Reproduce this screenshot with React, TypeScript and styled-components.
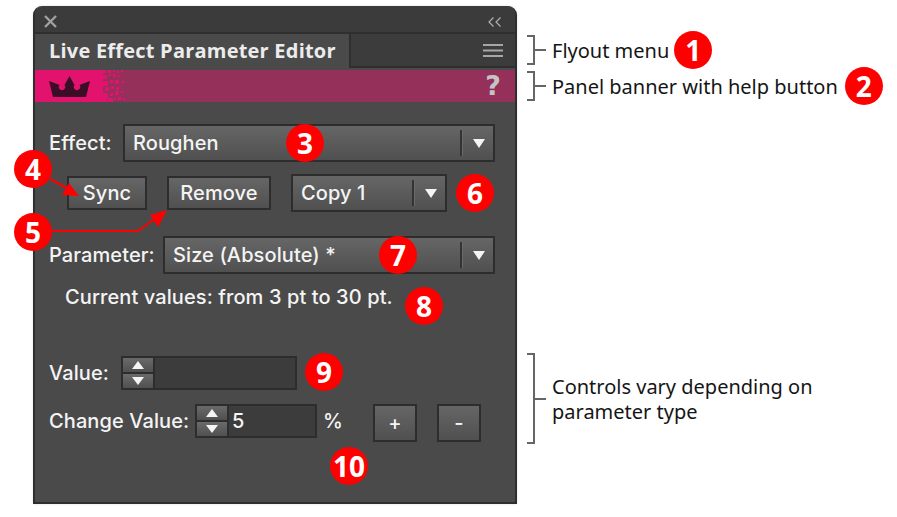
import styled, { createGlobalStyle } from "styled-components";

const GlobalStyle = createGlobalStyle`
  html, body {
    margin: 0;
    padding: 0;
    background: #fff;
  }
`;

const Page = styled.div`
  display: flex;
  align-items: flex-start;
  width: 897px;
  height: 517px;
  padding: 6px 0 0 33px;
  box-sizing: border-box;
  overflow: hidden;
`;

const Panel = styled.div`
  position: relative;
  width: 484px;
  height: 498px;
  box-sizing: border-box;
  flex: none;
  display: flex;
  flex-direction: column;
  background: #4a4a4a;
  border: 2px solid #2e2e2e;
  border-top: 0;
  border-radius: 9px 9px 0 0;
  box-shadow: 0 0 3px rgba(0, 0, 0, 0.12);
  color: #f4f4f4;
  font-family: "Inter", "Liberation Sans", sans-serif;
  font-size: 20px;
  font-weight: 500;
  letter-spacing: 0.1px;
`;

const TitleBar = styled.div`
  height: 26px;
  flex: none;
  box-sizing: border-box;
  display: flex;
  align-items: center;
  justify-content: space-between;
  padding: 5px 14px 0 9px;
  background: #3b3b3b;
  border-radius: 9px 9px 0 0;
`;

const TabRow = styled.div`
  height: 36px;
  flex: none;
  display: flex;
  background: #3c3c3c;
  border-top: 2px solid #2f2f2f;
  box-sizing: border-box;
`;

const Tab = styled.div`
  width: 314px;
  height: 36px;
  padding: 0 0 4px 14px;
  box-sizing: border-box;
  display: flex;
  align-items: center;
  background: #4a4a4a;
  color: #ececec;
  font-family: "Open Sans", sans-serif;
  font-weight: 700;
  font-size: 20px;
  letter-spacing: 0.22px;
`;

const TabRest = styled.div`
  flex: 1;
  display: flex;
  align-items: center;
  justify-content: flex-end;
  padding-right: 12px;
  border-left: 2px solid #2f2f2f;
  border-bottom: 2px solid #2f2f2f;
`;

const Banner = styled.div`
  height: 32px;
  margin-top: 2px;
  flex: none;
  display: flex;
  align-items: center;
  background: #943059;
`;

const BannerLead = styled.div`
  width: 68px;
  height: 100%;
  flex: none;
  display: flex;
  align-items: center;
  justify-content: center;
  background: #e3126e;
`;

const Help = styled.div`
  margin-left: auto;
  margin-right: 14px;
  color: #c4c4c4;
  font-family: "DejaVu Sans", sans-serif;
  font-weight: 700;
  font-size: 27px;
  line-height: 32px;
`;

const Body = styled.div`
  display: flex;
  flex-direction: column;
  padding: 22px 20px 0 14px;
`;

const Row = styled.div<{ $top?: number; $left?: number }>`
  display: flex;
  align-items: center;
  margin-top: ${(p) => p.$top ?? 0}px;
  margin-left: ${(p) => p.$left ?? 0}px;
`;

const Label = styled.span<{ $width: number }>`
  flex: none;
  width: ${(p) => p.$width}px;
`;

const Select = styled.div<{ $width: number; $left?: number }>`
  width: ${(p) => p.$width}px;
  height: 38px;
  margin-left: ${(p) => p.$left ?? 0}px;
  flex: none;
  box-sizing: border-box;
  display: flex;
  align-items: center;
  padding-left: 8px;
  background: linear-gradient(#666666, #505050);
  border: 2px solid #2d2d2d;
`;

const SelectText = styled.span`
  flex: 1;
`;

const SelectDivider = styled.i`
  display: block;
  width: 2px;
  height: 26px;
  background: #333;
  box-shadow: 1px 0 0 #6a6a6a;
`;

const Caret = styled.i`
  display: block;
  width: 0;
  height: 0;
  margin: 0 8px 0 11px;
  border-left: 6px solid transparent;
  border-right: 6px solid transparent;
  border-top: 9px solid #f5f5f5;
`;

const Button = styled.div<{ $width: number; $left?: number }>`
  width: ${(p) => p.$width}px;
  height: 34px;
  margin-left: ${(p) => p.$left ?? 0}px;
  flex: none;
  box-sizing: border-box;
  display: flex;
  align-items: center;
  justify-content: center;
  background: linear-gradient(#666666, #505050);
  border: 2px solid #2d2d2d;
`;

// taller than the row it sits in, hangs 4px below the spinner
const TallButton = styled(Button)`
  height: 38px;
  align-self: flex-start;
  margin-bottom: -4px;
`;

const Spinner = styled.div<{ $width: number }>`
  width: ${(p) => p.$width}px;
  height: 34px;
  flex: none;
  box-sizing: border-box;
  display: flex;
  align-items: center;
  background: #3c3c3c;
  border: 2px solid #2d2d2d;
`;

const Steppers = styled.div`
  width: 30px;
  height: 100%;
  flex: none;
  display: flex;
  flex-direction: column;
  border-right: 2px solid #2d2d2d;
`;

const Step = styled.div<{ $down?: boolean }>`
  flex: 1;
  display: flex;
  align-items: center;
  justify-content: center;
  background: linear-gradient(#6a6a6a, #505050);
  border-top: ${(p) => (p.$down ? "2px solid #2d2d2d" : "0")};

  &::before {
    content: "";
    border-left: 6px solid transparent;
    border-right: 6px solid transparent;
    ${(p) =>
      p.$down
        ? "border-top: 8px solid #f5f5f5;"
        : "border-bottom: 8px solid #f5f5f5;"}
  }
`;

const SpinValue = styled.span`
  padding-left: 3px;
`;

const Note = styled.p`
  margin: 12px 0 0 16px;
  line-height: 22px;
`;

const Percent = styled.span`
  width: 56px;
  flex: none;
  box-sizing: border-box;
  padding-left: 6px;
`;

const Badge = styled.div<{ $x?: number; $y?: number }>`
  width: 38px;
  height: 38px;
  flex: none;
  display: flex;
  align-items: center;
  justify-content: center;
  border-radius: 50%;
  background: #fe0000;
  color: #fff;
  font-family: "Open Sans", sans-serif;
  font-weight: 700;
  font-size: 28px;
  letter-spacing: 0;
  ${(p) =>
    p.$x !== undefined
      ? `position: absolute; left: ${p.$x - 19}px; top: ${p.$y! - 19}px;`
      : ""}
`;

const Arrows = styled.svg`
  position: absolute;
  left: -2px;
  top: 0;
  overflow: visible;
`;

const Notes = styled.div`
  margin-left: 10px;
  padding-top: 25px;
  display: flex;
  flex-direction: column;
  color: #151515;
  font-family: "Noto Sans", sans-serif;
  font-size: 20px;
`;

const Annotation = styled.div<{ $top?: number }>`
  display: flex;
  align-items: center;
  margin-top: ${(p) => p.$top ?? 0}px;
`;

const Bracket = styled.div<{ $height: number }>`
  position: relative;
  width: 8px;
  height: ${(p) => p.$height}px;
  flex: none;
  box-sizing: border-box;
  border: 2px solid #666;
  border-left: 0;
  margin-right: 17px;

  &::after {
    content: "";
    position: absolute;
    left: 8px;
    top: calc(50% - 1px);
    width: 11px;
    height: 2px;
    background: #666;
  }
`;

const NoteText = styled.div`
  line-height: 25px;
`;

const FlyoutBadge = styled(Badge)`
  margin-left: 5px;
`;

const HelpBadge = styled(Badge)`
  margin-left: 7px;
`;

const Crown = () => (
  <svg width="41" height="21" viewBox="0 0 41 21">
    <path
      fill="#3c0d27"
      d="M0 5 L10.5 9 A3.2 3.2 0 1 0 15.5 9 L20.5 0 L25.5 9 A3.2 3.2 0 1 0 30.5 9 L41 5 L37 21 H4 Z"
    />
  </svg>
);

// dither squares between the pink lead and the plum banner: [x, y, size]
const dither = [
  [0, 0, 3], [5, 0, 3], [10, 0, 2], [14, 1, 2], [18, 0, 2],
  [0, 5, 4], [6, 4, 2], [10, 4, 3], [15, 5, 2], [20, 4, 1],
  [0, 11, 5], [7, 10, 3], [12, 10, 4], [19, 11, 2],
  [2, 17, 4], [8, 16, 3], [13, 17, 3], [18, 16, 1],
  [0, 23, 5], [7, 23, 3], [12, 21, 4], [18, 21, 2],
  [0, 28, 4], [5, 28, 5], [11, 28, 2], [15, 27, 3], [20, 28, 2],
];

const Dither = () => (
  <svg width="23" height="32" viewBox="0 0 23 32">
    {dither.map(([x, y, s]) => (
      <rect key={`${x}-${y}`} x={x} y={y} width={s} height={s} fill="#e3126e" />
    ))}
  </svg>
);

export default function App() {
  return (
    <>
      <GlobalStyle />
      <Page>
        <Panel>
          <TitleBar>
            <svg width="13" height="13" viewBox="0 0 13 13">
              <path d="M1 1 L12 12 M12 1 L1 12" stroke="#a0a0a0" strokeWidth="2.4" />
            </svg>
            <svg width="13" height="10" viewBox="0 0 13 10">
              <path d="M5.5 0.5 L1 5 L5.5 9.5 M12.5 0.5 L8 5 L12.5 9.5" stroke="#b0b0b0" strokeWidth="1.2" fill="none" />
            </svg>
          </TitleBar>
          <TabRow>
            <Tab>Live Effect Parameter Editor</Tab>
            <TabRest>
              <svg width="20" height="13" viewBox="0 0 20 13">
                <path d="M0 1 H20 M0 6.5 H20 M0 12 H20" stroke="#a6a6a6" strokeWidth="2" />
              </svg>
            </TabRest>
          </TabRow>
          <Banner>
            <BannerLead>
              <Crown />
            </BannerLead>
            <Dither />
            <Help>?</Help>
          </Banner>
          <Body>
            <Row>
              <Label $width={74}>Effect:</Label>
              <Select $width={372}>
                <SelectText>Roughen</SelectText>
                <SelectDivider />
                <Caret />
              </Select>
            </Row>
            <Row $top={12} $left={18}>
              <Button $width={80}>Sync</Button>
              <Button $width={104} $left={20}>
                Remove
              </Button>
              <Select $width={156} $left={20}>
                <SelectText>Copy 1</SelectText>
                <SelectDivider />
                <Caret />
              </Select>
            </Row>
            <Row $top={24}>
              <Label $width={114}>Parameter:</Label>
              <Select $width={332}>
                <SelectText>Size (Absolute) *</SelectText>
                <SelectDivider />
                <Caret />
              </Select>
            </Row>
            <Note>Current values: from 3 pt to 30 pt.</Note>
            <Row $top={48}>
              <Label $width={72}>Value:</Label>
              <Spinner $width={176}>
                <Steppers>
                  <Step />
                  <Step $down />
                </Steppers>
              </Spinner>
            </Row>
            <Row $top={14}>
              <Label $width={146}>Change Value:</Label>
              <Spinner $width={122}>
                <Steppers>
                  <Step />
                  <Step $down />
                </Steppers>
                <SpinValue>5</SpinValue>
              </Spinner>
              <Percent>%</Percent>
              <TallButton $width={44}>+</TallButton>
              <TallButton $width={44} $left={20}>
                -
              </TallButton>
            </Row>
          </Body>
          <Arrows width="484" height="498" viewBox="33 6 484 498">
            <path d="M50 179 L70 190" stroke="#f00" strokeWidth="2" fill="none" />
            <path d="M79 196 L69 183 L62 195 Z" fill="#f00" />
            <path d="M50 231 H138 L156 218" stroke="#f00" strokeWidth="2" fill="none" />
            <path d="M167 210 L150 215 L158 227 Z" fill="#f00" />
          </Arrows>
          <Badge $x={305 - 35} $y={143 - 6}>3</Badge>
          <Badge $x={33 - 35} $y={169 - 6}>4</Badge>
          <Badge $x={33 - 35} $y={232 - 6}>5</Badge>
          <Badge $x={475 - 35} $y={193 - 6}>6</Badge>
          <Badge $x={398 - 35} $y={255 - 6}>7</Badge>
          <Badge $x={424 - 35} $y={306 - 6}>8</Badge>
          <Badge $x={324 - 35} $y={372 - 6}>9</Badge>
          <Badge $x={349 - 35} $y={466 - 6}>10</Badge>
        </Panel>
        <Notes>
          <Annotation>
            <Bracket $height={30} />
            <NoteText>Flyout menu</NoteText>
            <FlyoutBadge>1</FlyoutBadge>
          </Annotation>
          <Annotation $top={-2}>
            <Bracket $height={30} />
            <NoteText>Panel banner with help button</NoteText>
            <HelpBadge>2</HelpBadge>
          </Annotation>
          <Annotation $top={248}>
            <Bracket $height={91} />
            <NoteText>
              Controls vary depending on
              <br />
              parameter type
            </NoteText>
          </Annotation>
        </Notes>
      </Page>
    </>
  );
}
